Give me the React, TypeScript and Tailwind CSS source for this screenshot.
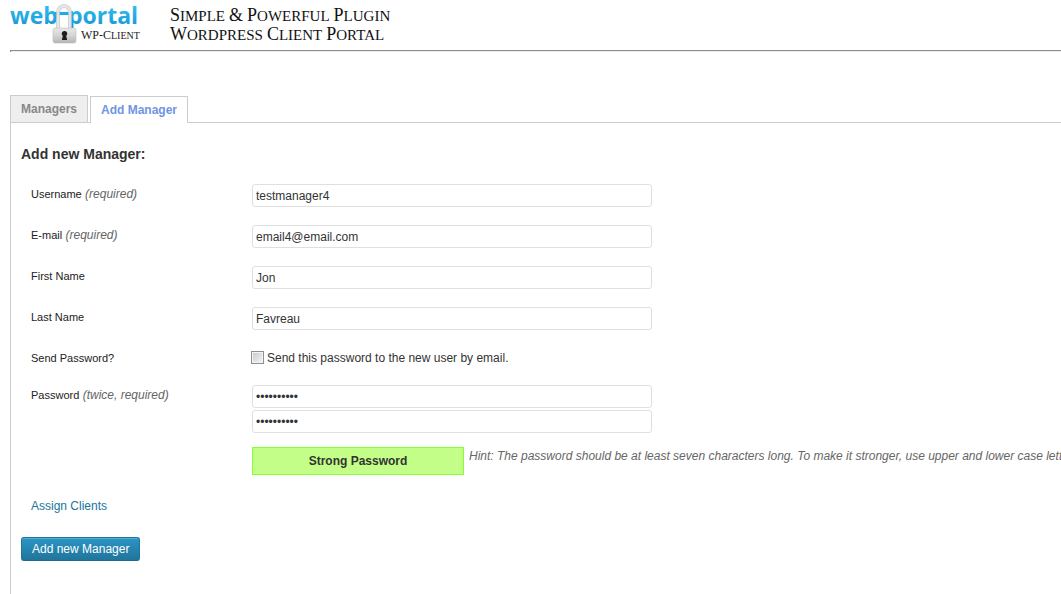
import { useState } from "react";
import type { ReactNode } from "react";

function Logo() {
  return (
    <svg viewBox="0 0 132 46" className="h-[46px] w-[132px] shrink-0 overflow-visible" role="img" aria-label="web portal WP-Client">
      <defs>
        <linearGradient id="word" gradientUnits="userSpaceOnUse" x1="0" y1="5" x2="0" y2="30">
          <stop offset="0" stopColor="#2fc0ee" />
          <stop offset="1" stopColor="#1690d4" />
        </linearGradient>
        <linearGradient id="body" x1="0" y1="0" x2="0" y2="1">
          <stop offset="0" stopColor="#e8e8e8" />
          <stop offset="0.5" stopColor="#d4d4d4" />
          <stop offset="1" stopColor="#b4b4b4" />
        </linearGradient>
      </defs>
      <g fill="url(#word)" className="font-['Open_Sans',sans-serif] text-[23px] font-bold">
        <text x="0" y="24">web</text>
        <text x="58" y="24">portal</text>
      </g>
      <path d="M44 13.500h18" stroke="#22aae4" strokeWidth="3" />
      <path d="M48 28V12.500a6 6.500 0 0 1 12 0V28" fill="none" stroke="#c3c7ca" strokeWidth="4" strokeOpacity="0.800" />
      <path d="M48 28V12.500a6 6.500 0 0 1 12 0V28" fill="none" stroke="#eceeef" strokeWidth="2" strokeOpacity="0.800" />
      <rect x="43" y="28" width="23" height="15" rx="2" fill="url(#body)" stroke="#bdbdbd" strokeWidth="0.600" />
      <path d="M54.500 31a2.600 2.600 0 0 1 1.700 4.700l.9 4.300h-5.200l.9-4.300a2.600 2.600 0 0 1 1.700-4.700z" fill="#1b1b1b" />
      <text x="71" y="39" fill="#222" className="font-['Liberation_Serif',serif] text-[12px]">
        WP-C<tspan className="text-[10px]">LIENT</tspan>
      </text>
    </svg>
  );
}

function SmallCaps({ text }: { text: string }) {
  return (
    <span className="flex items-baseline gap-1">
      {text.split(" ").map((word) => (
        <span key={word} className={word === "&" ? "block text-[18px]" : "block uppercase first-letter:text-[18px]"}>
          {word}
        </span>
      ))}
    </span>
  );
}

function Row({ label, note, htmlFor, children }: { label: string; note?: string; htmlFor: string; children: ReactNode }) {
  return (
    <div className="flex items-start">
      <label htmlFor={htmlFor} className="w-[221px] shrink-0 pt-[2px] text-[11px] leading-4 text-[#222]">
        {label}
        {note && <span className="text-[12px] text-[#666] italic"> {note}</span>}
      </label>
      <div className="min-w-0 flex-1">{children}</div>
    </div>
  );
}

function Field({ id, type = "text", value, label }: { id: string; type?: string; value: string; label?: string }) {
  return (
    <input
      id={id}
      type={type}
      defaultValue={value}
      aria-label={label}
      className="block h-[23px] w-full max-w-[400px] rounded-[3px] border border-[#dfdfdf] bg-white px-[3px] text-[12px] text-[#333] outline-none focus:border-[#aaa]"
    />
  );
}

export default function App() {
  const [send, setSend] = useState(false);
  return (
    <div className="flex min-h-screen flex-col overflow-x-hidden bg-white pl-[10px] font-['Liberation_Sans',Arial,sans-serif] text-[12px] text-[#333]">
      <header className="flex h-[50px] items-start gap-7">
        <Logo />
        <div className="pt-[6px] font-['Liberation_Serif',serif] text-[15px] leading-[18px] whitespace-nowrap text-[#111]">
          <SmallCaps text="Simple & Powerful Plugin" />
          <SmallCaps text="Wordpress Client Portal" />
        </div>
      </header>
      <hr className="h-[2px] border-0 border-t border-l border-[#8c8c8c] bg-[#eee]" />

      <nav className="mt-[43px] flex h-7 items-stretch text-[12px] font-bold">
        <a href="#managers" className="flex items-center border border-[#ccc] bg-[#eee] px-[10px] text-[#888]">
          Managers
        </a>
        <span className="w-[2px] border-b border-[#ccc]" />
        <a href="#add" aria-current="page" className="mt-px flex items-center border border-b-0 border-[#ccc] px-[10px] text-[#7094e3]">
          Add Manager
        </a>
        <span className="flex-1 border-b border-[#ccc]" />
      </nav>

      <main className="flex-1 border-l border-[#ccc] pt-[22px] pl-[10px]">
        <h1 className="text-[14px] leading-[18px] font-bold">Add new Manager:</h1>
        <form onSubmit={(e) => e.preventDefault()}>
          <div className="mt-[21px] flex flex-col gap-[18px] pl-[10px]">
            <Row label="Username" note="(required)" htmlFor="username">
              <Field id="username" value="testmanager4" />
            </Row>
            <Row label="E-mail" note="(required)" htmlFor="email">
              <Field id="email" value="email4@email.com" />
            </Row>
            <Row label="First Name" htmlFor="first">
              <Field id="first" value="Jon" />
            </Row>
            <Row label="Last Name" htmlFor="last">
              <Field id="last" value="Favreau" />
            </Row>
            <Row label="Send Password?" htmlFor="send">
              <div className="flex h-[19px] items-center gap-[3px]">
                <input
                  id="send"
                  type="checkbox"
                  checked={send}
                  onChange={(e) => setSend(e.target.checked)}
                  className="-ml-px h-[13px] w-[13px] appearance-none border border-[#8e8f8f] bg-linear-to-br from-[#c3c8cf] to-[#f6f6f6] shadow-[inset_0_0_0_1px_#f4f4f4] checked:from-[#2d8ab5] checked:to-[#2d8ab5]"
                />
                <label htmlFor="send" className="text-[12px] leading-4">Send this password to the new user by email.</label>
              </div>
            </Row>
            <Row label="Password" note="(twice, required)" htmlFor="pass1">
              <div className="flex flex-col gap-[2px]">
                <Field id="pass1" type="password" value="abcdefghij" />
                <Field id="pass2" type="password" value="abcdefghij" label="Repeat password" />
              </div>
              <div className="mt-[14px] flex items-start gap-[5px]">
                <div className="flex h-7 w-[212px] shrink-0 items-center justify-center border border-[#8f3] bg-[#c3ff88] font-bold">
                  Strong Password
                </div>
                <p className="leading-[18px] whitespace-nowrap text-[#666] italic">
                  Hint: The password should be at least seven characters long. To make it stronger, use upper and lower case letters
                </p>
              </div>
            </Row>
          </div>
          <a href="#assign" className="mt-[22px] ml-[10px] block w-fit leading-[18px] text-[#21759b]">
            Assign Clients
          </a>
          <button
            type="submit"
            className="mt-[22px] h-6 rounded-[3px] border border-[#21759b] border-b-[#1e6a8d] bg-linear-to-b from-[#2a95c5] to-[#21759b] px-[10px] text-[12px] text-white shadow-[inset_0_1px_0_rgba(120,200,230,0.5)]"
          >
            Add new Manager
          </button>
        </form>
      </main>
    </div>
  );
}
